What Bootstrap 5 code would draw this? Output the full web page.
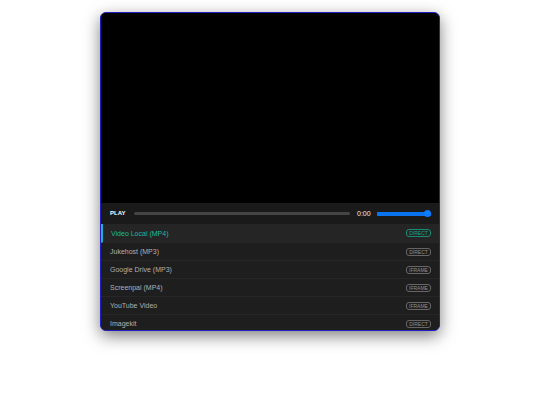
<!DOCTYPE html>
<html lang="en">
<head>
<meta charset="utf-8">
<meta name="viewport" content="width=device-width, initial-scale=1">
<title>Media player</title>
<link rel="stylesheet" href="https://cdn.jsdelivr.net/npm/bootstrap@5.3.0/dist/css/bootstrap.min.css">
<style>
body { font-family: "Liberation Sans", Arial, sans-serif; font-size: 7px; line-height: 9px; }
.page { padding-top: 12px; }
.player { max-width: 340px; background: #1a1a1a; border: 1px solid #2020c0; border-radius: 6px; box-shadow: 0 5px 16px rgba(0,0,0,.5); }
.controls { gap: 7px; padding: 6px 8px 6px 9px; background: #1a1a1a; color: #fff; }
.play-btn { width: 17px; font-size: 6px; line-height: 9px; color: #fff; }
.track { height: 3px; background: #444; border-radius: 2px; }
.track .progress-bar { background: #0a7cff; }
.time { width: 13px; white-space: nowrap; color: #eee; }
.volume { width: 54px; height: 7px; margin: 0; appearance: none; background: linear-gradient(#0a74f0, #0a74f0) center / 100% 4px no-repeat; border-radius: 2px; }
.volume::-webkit-slider-thumb { appearance: none; width: 7px; height: 7px; border-radius: 50%; background: #0a7cff; }
.playlist { max-height: 106px; background: #1e1e1e; scrollbar-width: none; overflow-y: auto; }
.playlist::-webkit-scrollbar { display: none; }
.media-item { height: 18px; flex: none; padding: 0 8px 0 9px; border: 0; border-bottom: 1px solid #262626; background: #1e1e1e; color: #b0b0b0; text-align: left; }
.media-item.current { height: 19px; padding-left: 8px; border-left: 2px solid #29abc6; background: #252525; color: #1abc9c; }
.kind { width: 25px; border: 1px solid #666; border-radius: 3px; font-size: 5px; line-height: 6px; color: #909090; text-align: center; }
.current .kind { border-color: #168c75; color: #18a88c; }
</style>
</head>
<body class="bg-white">
<main class="page container-fluid min-vh-100">
  <section class="player mx-auto overflow-hidden" aria-label="Media player">
    <div class="ratio ratio-16x9 bg-black"><video aria-label="Video"></video></div>
    <div class="controls d-flex align-items-center">
      <button type="button" class="play-btn border-0 bg-transparent p-0 fw-bold text-start">PLAY</button>
      <div class="track progress flex-grow-1" role="progressbar" aria-label="Playback position" aria-valuenow="0" aria-valuemin="0" aria-valuemax="100"><div class="progress-bar w-0"></div></div>
      <span class="time">0:00</span>
      <input type="range" class="volume" min="0" max="100" value="100" aria-label="Volume">
    </div>
    <div class="playlist d-flex flex-column">
      <button type="button" class="media-item current d-flex align-items-center justify-content-between" aria-current="true"><span>Video Local (MP4)</span><span class="kind">DIRECT</span></button>
      <button type="button" class="media-item d-flex align-items-center justify-content-between"><span>Jukehost (MP3)</span><span class="kind">DIRECT</span></button>
      <button type="button" class="media-item d-flex align-items-center justify-content-between"><span>Google Drive (MP3)</span><span class="kind">IFRAME</span></button>
      <button type="button" class="media-item d-flex align-items-center justify-content-between"><span>Screenpal (MP4)</span><span class="kind">IFRAME</span></button>
      <button type="button" class="media-item d-flex align-items-center justify-content-between"><span>YouTube Video</span><span class="kind">IFRAME</span></button>
      <button type="button" class="media-item d-flex align-items-center justify-content-between"><span>Imagekit</span><span class="kind">DIRECT</span></button>
    </div>
  </section>
</main>
<script src="https://cdn.jsdelivr.net/npm/bootstrap@5.3.0/dist/js/bootstrap.bundle.min.js"></script>
</body>
</html>
